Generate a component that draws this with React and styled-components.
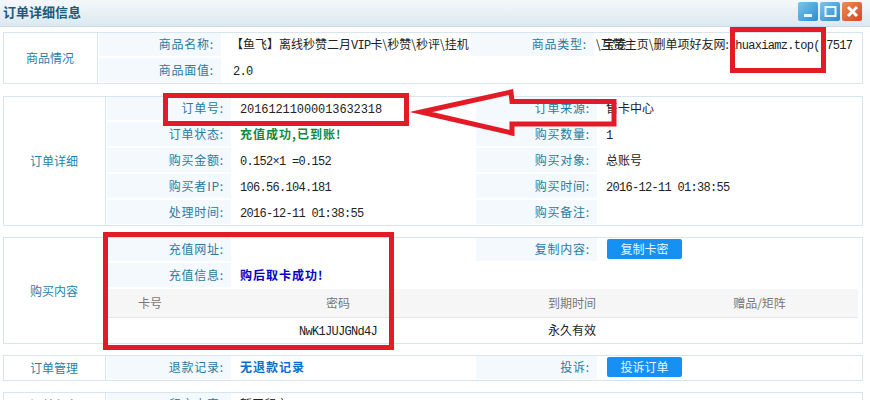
import React from 'react';
import styled, { createGlobalStyle } from 'styled-components';

const GlobalStyle = createGlobalStyle`
html, body {
  margin: 0;
  padding: 0;
  background: #fff;
}
`

const Page = styled.div`
position: relative;
width: 870px;
height: 400px;
overflow: hidden;
background: #fff;
font-family: "Liberation Mono", "Noto Sans CJK SC", monospace;
font-size: 12px;
color: #222;
`

const TitleBar = styled.div`
display: flex;
align-items: center;
justify-content: space-between;
height: 23px;
padding: 0 8px 3px 3px;
background: linear-gradient(#f4f8fb, #dce8f1);
border-bottom: 1px solid #c6d9e5;
`

const Title = styled.div`
font-family: "Noto Sans CJK SC", sans-serif;
font-size: 13px;
font-weight: 700;
color: #1d5a76;
`

const WinButtons = styled.div`
display: flex;
gap: 2px;
`

const WinButton = styled.div`
display: flex;
align-items: center;
justify-content: center;
width: 20px;
height: 19px;
border-radius: 2px;
background: ${p => p.$bg};
`

const Panels = styled.div`
display: flex;
flex-direction: column;
gap: 11px;
width: 860px;
margin: 5px 0 0 3px;
`

const Panel = styled.section`
display: flex;
flex: none;
margin-bottom: ${p => p.$after || 0}px;
background: #fff;
outline: 1px solid #d6e5ee;
outline-offset: -1px;
`

const Side = styled.div`
display: flex;
align-items: center;
justify-content: center;
flex: none;
box-sizing: border-box;
width: ${p => p.$width}px;
padding-bottom: 1px;
border-right: 1px solid #d6e5ee;
font-family: "Noto Sans CJK SC", sans-serif;
color: #1f81a8;
`

const Body = styled.div`
flex: 1;
min-width: 0;
padding-left: 1px;
`

const Row = styled.div`
display: grid;
grid-template-columns: ${p => p.$cols || '124px 245px 121px 1fr'};
height: 26px;
`

const Label = styled.div`
box-sizing: border-box;
height: 26px;
padding-right: 7px;
border-bottom: 2px solid #fff;
background: #f3f9fc;
font-family: "Noto Sans CJK SC", sans-serif;
letter-spacing: .8px;
line-height: 24px;
text-align: right;
color: #2b7a9e;
`

const Value = styled.div`
position: relative;
padding-left: ${p => p.$pad ?? 9}px;
font-family: "Noto Sans CJK SC", sans-serif;
letter-spacing: ${p => p.$bold ? '1px' : '0'};
line-height: 23px;
white-space: nowrap;
overflow: ${p => p.$clip ? 'hidden' : 'visible'};
color: ${p => p.$color || '#222'};
font-weight: ${p => p.$bold ? 700 : 400};
`

const Mono = styled.span`
font-family: "Liberation Mono", monospace;
font-size: 12px;
letter-spacing: ${p => p.$spaced ? '-.1px' : '-.7px'};
`

const Overprint = styled.span`
position: absolute;
left: 9px;
top: 0;
`

const ActionButton = styled.button`
display: block;
width: 75px;
height: 20px;
margin: 2px 0 0 1px;
padding: 0;
border: 0;
border-radius: 2px;
background: #1690f2;
color: #e8f6ff;
font-family: "Noto Sans CJK SC", sans-serif;
font-size: 12px;
line-height: 20px;
`

const TableHead = styled.div`
display: grid;
grid-template-columns: 86px 290px 178px 1fr;
height: 29px;
margin-right: 5px;
border-bottom: 1px solid #e2e6e8;
box-sizing: border-box;
background: #f6f6f6;
color: #777;
font-family: "Noto Sans CJK SC", sans-serif;
line-height: 28px;
text-align: center;
`

const TableRow = styled.div`
display: grid;
grid-template-columns: 86px 290px 178px 199px;
height: 26px;
font-family: "Noto Sans CJK SC", sans-serif;
line-height: 23px;
text-align: center;
`

const Annotations = styled.svg`
position: absolute;
left: 0;
top: 0;
pointer-events: none;
`

const RED = '#e21b26'

function Details({ left, right }) {
  return (
    <Row>
      <Label>{left[0]}</Label>
      {left[1]}
      <Label>{right[0]}</Label>
      {right[1]}
    </Row>
  );
}

function App() {
  return (
    <Page>
      <GlobalStyle />
      <TitleBar>
        <Title>订单详细信息</Title>
        <WinButtons>
          <WinButton $bg="linear-gradient(135deg, #7cc4ec, #2a8cd0)">
            <svg width="13" height="13"><rect x="2" y="9" width="8" height="3" fill="#eaf6fd" /></svg>
          </WinButton>
          <WinButton $bg="linear-gradient(135deg, #7cc4ec, #2a8cd0)">
            <svg width="13" height="13"><rect x="1.5" y="2" width="10" height="9" fill="none" stroke="#eaf6fd" strokeWidth="2" /></svg>
          </WinButton>
          <WinButton $bg="linear-gradient(135deg, #ee8a5c, #d24a22)">
            <svg width="13" height="13"><path d="M2 2 L11 11 M11 2 L2 11" stroke="#fff" strokeWidth="3" /></svg>
          </WinButton>
        </WinButtons>
      </TitleBar>

      <Panels>
        <Panel $after={1}>
          <Side $width={95}>商品情况</Side>
          <Body>
            <Row $cols="122px 250px 123px 1fr">
              <Label>商品名称:</Label>
              <Value $pad={10} $clip>【鱼飞】离线秒赞二月<Mono>VIP</Mono>卡\秒赞\秒评\挂机</Value>
              <Label>商品类型:</Label>
              <Value $pad={2}>\互赞主页\删单项好友网:<Mono>lhuaxiamz.top(.7517</Mono><Overprint>宝卷</Overprint></Value>
            </Row>
            <Row $cols="122px 250px 123px 1fr">
              <Label>商品面值:</Label>
              <Value $pad={12}><Mono>2.0</Mono></Value>
            </Row>
          </Body>
        </Panel>

        <Panel>
          <Side $width={103}>订单详细</Side>
          <Body>
            <Details
              left={['订单号:', <Value><Mono $spaced>20161211000013632318</Mono></Value>]}
              right={['订单来源:', <Value>售卡中心</Value>]}
            />
            <Details
              left={['订单状态:', <Value $bold $color="#12893b">充值成功,已到账!</Value>]}
              right={['购买数量:', <Value><Mono>1</Mono></Value>]}
            />
            <Details
              left={['购买金额:', <Value><Mono>0.152×1 =0.152</Mono></Value>]}
              right={['购买对象:', <Value>总账号</Value>]}
            />
            <Details
              left={['购买者IP:', <Value><Mono>106.56.104.181</Mono></Value>]}
              right={['购买时间:', <Value><Mono>2016-12-11 01:38:55</Mono></Value>]}
            />
            <Details
              left={['处理时间:', <Value><Mono>2016-12-11 01:38:55</Mono></Value>]}
              right={['购买备注:', <Value />]}
            />
          </Body>
        </Panel>

        <Panel>
          <Side $width={103}>购买内容</Side>
          <Body>
            <Details
              left={['充值网址:', <Value />]}
              right={['复制内容:', <Value><ActionButton>复制卡密</ActionButton></Value>]}
            />
            <Row>
              <Label>充值信息:</Label>
              <Value $bold $color="#0000c8">购后取卡成功!</Value>
            </Row>
            <TableHead>
              <div>卡号</div>
              <div>密码</div>
              <div>到期时间</div>
              <div>赠品/矩阵</div>
            </TableHead>
            <TableRow>
              <div />
              <div><Mono>NwK1JUJGNd4J</Mono></div>
              <div>永久有效</div>
              <div />
            </TableRow>
          </Body>
        </Panel>

        <Panel>
          <Side $width={103}>订单管理</Side>
          <Body>
            <Details
              left={['退款记录:', <Value $bold $color="#0b6fd2">无退款记录</Value>]}
              right={['投诉:', <Value><ActionButton>投诉订单</ActionButton></Value>]}
            />
          </Body>
        </Panel>

        <Panel>
          <Side $width={103}>订单留言</Side>
          <Body>
            <Row>
              <Label>留言内容:</Label>
              <Value>暂无留言</Value>
            </Row>
          </Body>
        </Panel>
      </Panels>

      <Annotations width="870" height="400">
        <g fill="none" stroke={RED} strokeWidth="5">
          <rect x="165.5" y="95.5" width="241" height="28" />
          <rect x="732.5" y="29.5" width="91" height="41" />
          <rect x="105.5" y="234.5" width="286" height="113" />
          <path d="M421 112 L511 92 L512 101.5 L614 101.5 L614 124 L512 124 L512 133 Z" strokeWidth="5" strokeMiterlimit="10" />
        </g>
      </Annotations>
    </Page>
  );
}

export default App;
